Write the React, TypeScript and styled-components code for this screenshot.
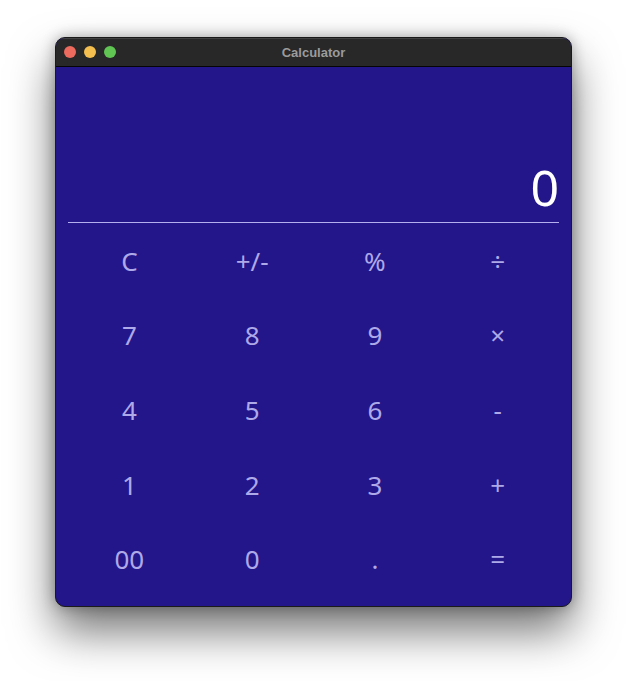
import React from "react";
import styled, { createGlobalStyle } from "styled-components";

const GlobalStyle = createGlobalStyle`
  html, body { margin: 0; padding: 0; background: #ffffff; }
  body { font-family: "Noto Sans", "Open Sans", sans-serif; }
`;

const Stage = styled.div`
  width: 627px;
  height: 681px;
  padding: 37px 0 0 55px;
  box-sizing: border-box;
`;

const Window = styled.div`
  width: 517px;
  height: 570px;
  box-sizing: border-box;
  border: 1px solid #1a1a1a;
  border-radius: 10px;
  overflow: hidden;
  display: flex;
  flex-direction: column;
  background: #23168b;
  box-shadow: 0 24px 45px rgba(0, 0, 0, 0.55), 0 0 14px rgba(0, 0, 0, 0.3);
`;

const TitleBar = styled.div`
  height: 28px;
  flex: 0 0 28px;
  background: #282828;
  border-bottom: 1px solid #050505;
  box-shadow: inset 0 1px 0 rgba(255, 255, 255, 0.12);
  position: relative;
  display: flex;
  align-items: center;
  justify-content: center;
`;

const Lights = styled.div`
  position: absolute;
  left: 8px;
  top: 8px;
  display: flex;
  gap: 8px;
`;

const Light = styled.span<{ $c: string }>`
  width: 12px;
  height: 12px;
  border-radius: 50%;
  background: ${(p) => p.$c};
`;

const Title = styled.div`
  font-family: "Liberation Sans", Arial, sans-serif;
  font-weight: 700;
  font-size: 13px;
  color: #9b9b9b;
`;

const Body = styled.div`
  flex: 1;
  display: flex;
  flex-direction: column;
  padding: 0 12px 10px 12px;
`;

const Display = styled.div`
  height: 156px;
  display: flex;
  align-items: flex-end;
  justify-content: flex-end;
  padding: 0 0 10px 0;
  box-sizing: border-box;
  border-bottom: 1px solid #b4b0f0;
  color: #ffffff;
  font-size: 50px;
  line-height: 1;
`;

const Pad = styled.div`
  flex: 1;
  display: grid;
  grid-template-columns: repeat(4, 1fr);
  grid-template-rows: repeat(5, 1fr);
`;

const Key = styled.button`
  border: none;
  background: transparent;
  color: #aea9e8;
  font-family: "Noto Sans", "Open Sans", sans-serif;
  font-size: 26px;
  line-height: 1;
  display: flex;
  align-items: center;
  justify-content: center;
  padding: 1px 0 0 0;
  cursor: pointer;
`;

const keys = [
  "C", "+/-", "%", "÷",
  "7", "8", "9", "×",
  "4", "5", "6", "-",
  "1", "2", "3", "+",
  "00", "0", ".", "=",
];

export default function App() {
  return (
    <>
      <GlobalStyle />
      <Stage>
        <Window>
          <TitleBar>
            <Lights>
              <Light $c="#ed6a5e" />
              <Light $c="#f5bf4f" />
              <Light $c="#61c554" />
            </Lights>
            <Title>Calculator</Title>
          </TitleBar>
          <Body>
            <Display>0</Display>
            <Pad>
              {keys.map((k, i) => (
                <Key key={i}>{k}</Key>
              ))}
            </Pad>
          </Body>
        </Window>
      </Stage>
    </>
  );
}
